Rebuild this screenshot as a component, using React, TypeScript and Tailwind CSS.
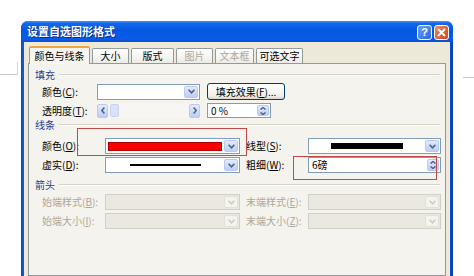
import React from "react";

function Chevron({ disabled }: { disabled?: boolean }) {
  return (
    <svg width="7" height="5" viewBox="0 0 7 5">
      <path d="M0.6 0.8 L3.5 3.8 L6.4 0.8" fill="none" stroke={disabled ? "#cdcbc0" : "#4d6185"} strokeWidth="1.6" />
    </svg>
  );
}

function DropBtn({ disabled }: { disabled?: boolean }) {
  return (
    <div
      className={
        disabled
          ? "w-[14px] my-px mr-px flex items-center justify-center rounded-[2px] border border-[#e3e1d7] bg-[#f4f3ee]"
          : "w-[14px] my-px mr-px flex items-center justify-center rounded-[2px] border border-[#b9c9f0] bg-[linear-gradient(#e2eafd,#bccdf8)]"
      }
    >
      <Chevron disabled={disabled} />
    </div>
  );
}

function Combo({ className, children, disabled }: { className: string; children?: React.ReactNode; disabled?: boolean }) {
  return (
    <div
      className={
        className +
        (disabled ? " h-full flex border border-[#d2d0c5] bg-[#ebe9df]" : " h-full flex border border-[#7f9db9] bg-white")
      }
    >
      <div className="flex-1 flex items-center justify-center">{children}</div>
      <DropBtn disabled={disabled} />
    </div>
  );
}

function SpinBtn() {
  return (
    <div className="w-[12px] my-px mr-px flex flex-col items-center justify-center gap-[2px] rounded-[2px] border border-[#b9c9f0] bg-[linear-gradient(#e2eafd,#bccdf8)]">
      <svg width="6" height="3" viewBox="0 0 6 3">
        <path d="M0.5 2.6 L3 0.4 L5.5 2.6" fill="none" stroke="#4d6185" strokeWidth="1.3" />
      </svg>
      <svg width="6" height="3" viewBox="0 0 6 3">
        <path d="M0.5 0.4 L3 2.6 L5.5 0.4" fill="none" stroke="#4d6185" strokeWidth="1.3" />
      </svg>
    </div>
  );
}

function Spin({ className, text }: { className: string; text: string }) {
  return (
    <div className={className + " h-full flex border border-[#7f9db9] bg-white"}>
      <div className="flex-1 flex items-center pl-[3px] text-[10px] leading-none text-black">{text}</div>
      <SpinBtn />
    </div>
  );
}

function Header({ label }: { label: string }) {
  return (
    <div className="h-[12px] flex items-center pl-[6px] pr-[5px]">
      <span className="text-[10px] leading-none text-[#1d3d94]">{label}</span>
      <div className="flex-1 ml-[4px] h-[2px] border-t border-[#d6d3c6] border-b border-b-white" />
    </div>
  );
}

function Label({ children, className, disabled }: { children: React.ReactNode; className: string; disabled?: boolean }) {
  return (
    <div className={className + (disabled ? " text-[10px] leading-none text-[#aca899]" : " text-[10px] leading-none text-black")}>
      {children}
    </div>
  );
}

function Tab({ label, active, disabled, className }: { label: string; active?: boolean; disabled?: boolean; className: string }) {
  if (active) {
    return (
      <div
        className={
          className +
          " h-[18px] -mb-px z-10 flex items-center justify-center border-x border-[#919b9c] border-t-2 border-t-[#f0a43a] bg-[#f6f5f1] text-[10px] leading-none text-black rounded-t-[2px]"
        }
      >
        {label}
      </div>
    );
  }
  return (
    <div
      className={
        className +
        " h-[15px] flex items-center justify-center border-x border-t border-[#919b9c] bg-[linear-gradient(#ffffff,#ecebe6)] text-[10px] leading-none rounded-t-[2px] " +
        (disabled ? "text-[#aca899]" : "text-black")
      }
    >
      {label}
    </div>
  );
}

export default function App() {
  return (
    <div className="relative w-[474px] h-[276px] overflow-hidden bg-white font-['Noto_Sans_CJK_SC',sans-serif]">
      {/* background document lines */}
      <div className="absolute left-0 top-[74px] w-[17px] h-px bg-[#c9c9c9]" />
      <div className="absolute left-[17px] top-[62px] w-px h-[13px] bg-[#d6d6d6]" />
      <div className="absolute left-[463px] top-[77px] w-[11px] h-px bg-[#c9c9c9]" />

      <div className="pt-[21px] pl-[21px]">
        <div className="w-[432px] h-[255px] flex flex-col rounded-t-[7px] bg-[linear-gradient(90deg,#0a3fb8,#1b5fe0_2px,#0a4fd4_3px,#0a4fd4_429px,#0a3aa8)] overflow-hidden">
          {/* title bar */}
          <div className="h-[21px] flex items-center pl-[6px] pr-[4px] bg-[linear-gradient(#4a92f7_0%,#1167ea_12%,#0557e0_45%,#0a5ce8_85%,#0a4cd0_100%)]">
            <span className="text-[11px] font-bold leading-none text-white [text-shadow:1px_1px_0_#0a2a80]">设置自选图形格式</span>
            <div className="flex-1" />
            <div className="w-[15px] h-[15px] mt-[1px] flex items-center justify-center rounded-[3px] border border-white bg-[linear-gradient(135deg,#6aa0f6,#2f66e0)] text-[11px] font-bold leading-none text-white font-['Liberation_Sans',sans-serif]">
              ?
            </div>
            <div className="w-[15px] h-[15px] mt-[1px] ml-[2px] flex items-center justify-center rounded-[3px] border border-white bg-[linear-gradient(135deg,#f08a60,#d4451c)]">
              <svg width="9" height="9" viewBox="0 0 9 9">
                <path d="M1 1 L8 8 M8 1 L1 8" stroke="white" strokeWidth="1.8" />
              </svg>
            </div>
          </div>

          {/* body */}
          <div className="flex-1 mx-[3px] bg-[#ece9d8] flex flex-col px-[4px] pt-[4px]">
            {/* tabs */}
            <div className="flex items-end gap-[2px] ml-px h-[17px]">
              <Tab label="颜色与线条" active className="w-[61px]" />
              <Tab label="大小" className="w-[37px]" />
              <Tab label="版式" className="w-[43px]" />
              <Tab label="图片" disabled className="w-[37px]" />
              <Tab label="文本框" disabled className="w-[39px]" />
              <Tab label="可选文字" className="w-[47px]" />
            </div>

            {/* panel */}
            <div className="flex-1 border border-[#919b9c] bg-[#f4f3ee] flex flex-col">
              <div className="mt-[5px]">
                <Header label="填充" />
              </div>
              {/* row 1 */}
              <div className="mt-[2px] h-[17px] flex items-center pl-[13px]">
                <Label className="w-[55px]">
                  颜色(<span className="underline">C</span>):
                </Label>
                <div className="h-[16px] flex">
                  <Combo className="w-[103px]" />
                </div>
                <div className="ml-[7px] w-[78px] h-[17px] flex items-center justify-center rounded-[3px] border border-[#003c74] bg-[linear-gradient(#ffffff,#f0efe8_80%,#d8d5c8)] text-[10px] leading-none text-black">
                  填充效果(<span className="underline">F</span>)...
                </div>
              </div>
              {/* row 2 */}
              <div className="mt-[3px] h-[15px] flex items-center pl-[13px]">
                <Label className="w-[55px]">
                  透明度(<span className="underline">T</span>):
                </Label>
                <div className="w-[103px] h-[15px] flex items-center bg-[#f7f6f2]">
                  <div className="w-[11px] h-[14px] flex items-center justify-center rounded-[2px] border border-[#b9c9f0] bg-[linear-gradient(#e2eafd,#bccdf8)]">
                    <svg width="4" height="7" viewBox="0 0 4 7">
                      <path d="M3.4 0.6 L0.8 3.5 L3.4 6.4" fill="none" stroke="#4d6185" strokeWidth="1.5" />
                    </svg>
                  </div>
                  <div className="ml-[2px] w-[9px] h-[13px] rounded-[2px] border border-[#c5d3f5] bg-[#d8e2fb]" />
                  <div className="flex-1" />
                  <div className="w-[11px] h-[14px] flex items-center justify-center rounded-[2px] border border-[#b9c9f0] bg-[linear-gradient(#e2eafd,#bccdf8)]">
                    <svg width="4" height="7" viewBox="0 0 4 7">
                      <path d="M0.6 0.6 L3.2 3.5 L0.6 6.4" fill="none" stroke="#4d6185" strokeWidth="1.5" />
                    </svg>
                  </div>
                </div>
                <div className="ml-[7px] h-[15px] flex">
                  <Spin className="w-[64px]" text="0 %" />
                </div>
              </div>

              <div className="mt-[1px]">
                <Header label="线条" />
              </div>
              {/* row 3 */}
              <div className="mt-[7px] h-[16px] flex items-center pl-[13px]">
                <Label className="w-[63px]">
                  颜色(<span className="underline">O</span>):
                </Label>
                <Combo className="w-[135px]">
                  <div className="w-full h-[9px] ml-[2px] mr-[2px] bg-[#ff0000] border border-[#b00000]" />
                </Combo>
                <Label className="ml-[6px] w-[62px]">
                  线型(<span className="underline">S</span>):
                </Label>
                <Combo className="w-[133px]">
                  <div className="w-[72px] h-[6px] bg-black" />
                </Combo>
              </div>
              {/* row 4 */}
              <div className="mt-[3px] h-[16px] flex items-center pl-[13px]">
                <Label className="w-[63px]">
                  虚实(<span className="underline">D</span>):
                </Label>
                <Combo className="w-[135px]">
                  <div className="w-[71px] h-[2px] bg-black" />
                </Combo>
                <Label className="ml-[6px] w-[62px]">
                  粗细(<span className="underline">W</span>):
                </Label>
                <Spin className="w-[133px]" text="6磅" />
              </div>

              <div className="mt-[6px]">
                <Header label="箭头" />
              </div>
              {/* row 5 */}
              <div className="mt-[3px] h-[16px] flex items-center pl-[13px]">
                <Label disabled className="w-[63px]">
                  始端样式(<span className="underline">B</span>):
                </Label>
                <Combo disabled className="w-[135px]" />
                <Label disabled className="ml-[6px] w-[62px]">
                  末端样式(<span className="underline">E</span>):
                </Label>
                <Combo disabled className="w-[133px]" />
              </div>
              {/* row 6 */}
              <div className="mt-[3px] h-[16px] flex items-center pl-[13px]">
                <Label disabled className="w-[63px]">
                  始端大小(<span className="underline">I</span>):
                </Label>
                <Combo disabled className="w-[135px]" />
                <Label disabled className="ml-[6px] w-[62px]">
                  末端大小(<span className="underline">Z</span>):
                </Label>
                <Combo disabled className="w-[133px]" />
              </div>
            </div>
          </div>
        </div>
      </div>

      {/* red annotation rectangles */}
      <div className="absolute left-[77px] top-[128px] w-[170px] h-[28px] border border-[#c44a4a]" />
      <div className="absolute left-[293px] top-[156px] w-[144px] h-[24px] border border-[#c44a4a]" />
    </div>
  );
}
